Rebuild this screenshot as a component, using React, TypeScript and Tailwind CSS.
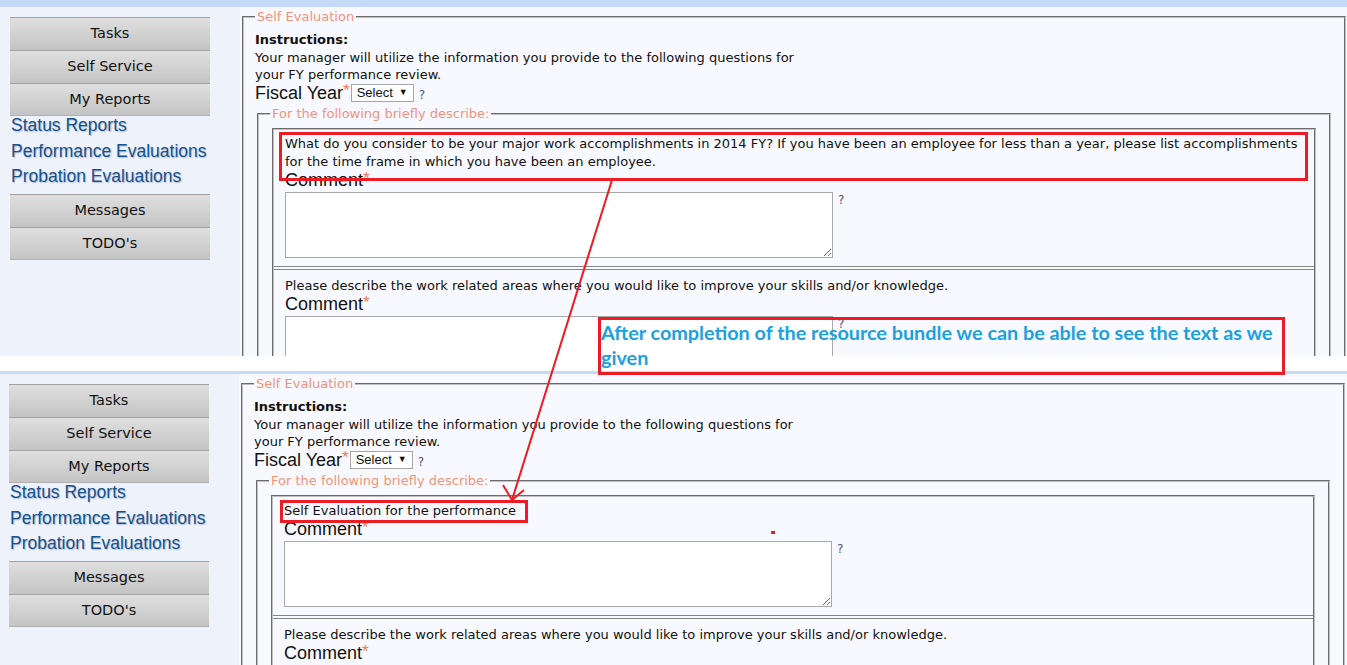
import React from "react";

const tahoma = "font-['DejaVu_Sans',Verdana,sans-serif]";
const arial = "font-['Liberation_Sans',Arial,sans-serif]";
const groove = "border-2 [--tw-border-style:groove] [border-style:groove] border-[#c0c0c0]";

function NavButton({ label, last }: { label: string; last?: boolean }) {
  return (
    <div
      className={`flex h-[33px] items-center justify-center border-t border-[#a2a2a2] bg-linear-to-b from-[#dfdfdf] to-[#c4c4c4] text-[14.5px] text-[#111] ${tahoma} ${
        last ? "border-b border-b-[#b0b0b0]" : ""
      }`}
    >
      {label}
    </div>
  );
}

function Sidebar() {
  return (
    <aside className="w-[240px] shrink-0 bg-[#eef2fb] pl-[10px] pt-[10px]">
      <div className="w-[200px]">
        <NavButton label="Tasks" />
        <NavButton label="Self Service" />
        <NavButton label="My Reports" last />
        <div
          className={`-mt-[3px] mb-[4.5px] pl-[1px] text-[17.5px] leading-[25.5px] text-[#17528a] [text-shadow:1px_1px_1px_rgba(40,80,140,0.3)] ${arial}`}
        >
          <div>Status Reports</div>
          <div>Performance Evaluations</div>
          <div>Probation Evaluations</div>
        </div>
        <NavButton label="Messages" />
        <NavButton label="TODO's" last />
      </div>
    </aside>
  );
}

function Help() {
  return <span className={`text-[12px] leading-[16px] text-[#50507e] ${tahoma}`}>?</span>;
}

function Comment() {
  return (
    <div className={`flex leading-[19px] text-[18px] text-[#111] ${arial}`}>
      Comment<span className="text-[17px] leading-[15px] text-[#ef7a55]">*</span>
    </div>
  );
}

function QuestionCell({ lines, first }: { lines: string[]; first?: boolean }) {
  return (
    <div
      className={`pl-[11px] pb-[8px] ${
        first ? "pt-[5px] border-b border-[#858585]" : "mt-[2px] pt-[7px] border-t border-[#858585]"
      }`}
    >
      <div className={`whitespace-nowrap text-[13px] leading-[18px] text-[#111] ${tahoma}`}>
        {lines.map((l) => (
          <div key={l}>{l}</div>
        ))}
      </div>
      <Comment />
      <div className="mt-[2px] flex items-start gap-[5px]">
        <textarea className="h-[66px] w-[548px] border border-[#a9a9a9] bg-white" />
        <Help />
      </div>
    </div>
  );
}

function Screen({ short }: { short?: boolean }) {
  const q1 = short
    ? ["Self Evaluation for the performance"]
    : [
        "What do you consider to be your major work accomplishments in 2014 FY? If you have been an employee for less than a year, please list accomplishments",
        "for the time frame in which you have been an employee.",
      ];
  return (
    <div className="w-[1348px]">
      <div className="h-[7px] bg-[#c5d9f8]" />
      <div className="flex">
        <Sidebar />
        <main className="flex-1 bg-[#f8f9fe] pt-[1px] pb-[40px]">
          <fieldset className={`mx-[2px] px-[11px] pt-[6px] pb-[12px] ${groove}`}>
            <legend className={`px-[2px] text-[13px] leading-[17px] text-[#f3937a] ${tahoma}`}>
              Self Evaluation
            </legend>
            <div className={`text-[13px] leading-[17px] text-[#111] ${tahoma}`}>
              <div className="font-bold">Instructions:</div>
              <div className="mt-[1px]">
                Your manager will utilize the information you provide to the following questions for
                <br />
                your FY performance review.
              </div>
            </div>
            <div className="flex h-[20px] items-center">
              <span className={`text-[18px] text-[#111] ${arial}`}>Fiscal Year</span>
              <span className={`self-start text-[17px] leading-[15px] text-[#ef7a55] ${arial}`}>*</span>
              <span
                className={`ml-[1px] flex h-[18px] w-[63px] items-center border border-[#a6a6a6] bg-white pl-[5px] pr-[5px] text-[13px] text-[#111] ${arial}`}
              >
                Select
                <span className="ml-auto text-[9px]">▼</span>
              </span>
              <span className="ml-[5px]">
                <Help />
              </span>
            </div>
            <fieldset className={`mx-[2px] mt-[2px] px-[13px] pt-[6px] pb-[12px] ${groove}`}>
              <legend className={`-ml-[2px] px-[2px] text-[13px] leading-[17px] text-[#f3937a] ${tahoma}`}>
                For the following briefly describe:
              </legend>
              <div className={groove}>
                <QuestionCell lines={q1} first />
                <QuestionCell lines={["Please describe the work related areas where you would like to improve your skills and/or knowledge."]} />
              </div>
            </fieldset>
          </fieldset>
        </main>
      </div>
    </div>
  );
}

export default function App() {
  return (
    <div className="relative h-[665px] w-[1347px] overflow-hidden bg-white">
      <div className="h-[356px] overflow-hidden">
        <Screen />
      </div>
      <div className="h-[15px] bg-white" />
      <div className="h-[294px] overflow-hidden">
        <div className="-ml-[1px] -mt-[4px]">
          <Screen short />
        </div>
      </div>

      {/* annotations */}
      <div className="absolute left-[279px] top-[132px] h-[49px] w-[1029px] border-[3px] border-[#ed1c24]" />
      <div className="absolute left-[280px] top-[500px] h-[23px] w-[248px] border-[3px] border-[#ed1c24]" />
      <div className="absolute left-[771px] top-[531px] h-[3px] w-[4px] bg-[#ed1c24]" />
      <div
        className={`absolute left-[598px] top-[317px] h-[58px] w-[687px] border-[3px] border-[#ed1c24] whitespace-nowrap text-[19.8px] font-bold leading-[25px] text-[#1ba1e2] font-['Lato',sans-serif]`}
      >
        After completion of the resource bundle we can be able to see the text as we
        <br />
        given
      </div>
      <svg className="pointer-events-none absolute left-0 top-0" width="1347" height="665">
        <line x1="612" y1="180" x2="512" y2="500" stroke="#ed1c24" strokeWidth="2" />
        <polyline points="503,485 512,500 524,490" fill="none" stroke="#ed1c24" strokeWidth="2" />
      </svg>
    </div>
  );
}
